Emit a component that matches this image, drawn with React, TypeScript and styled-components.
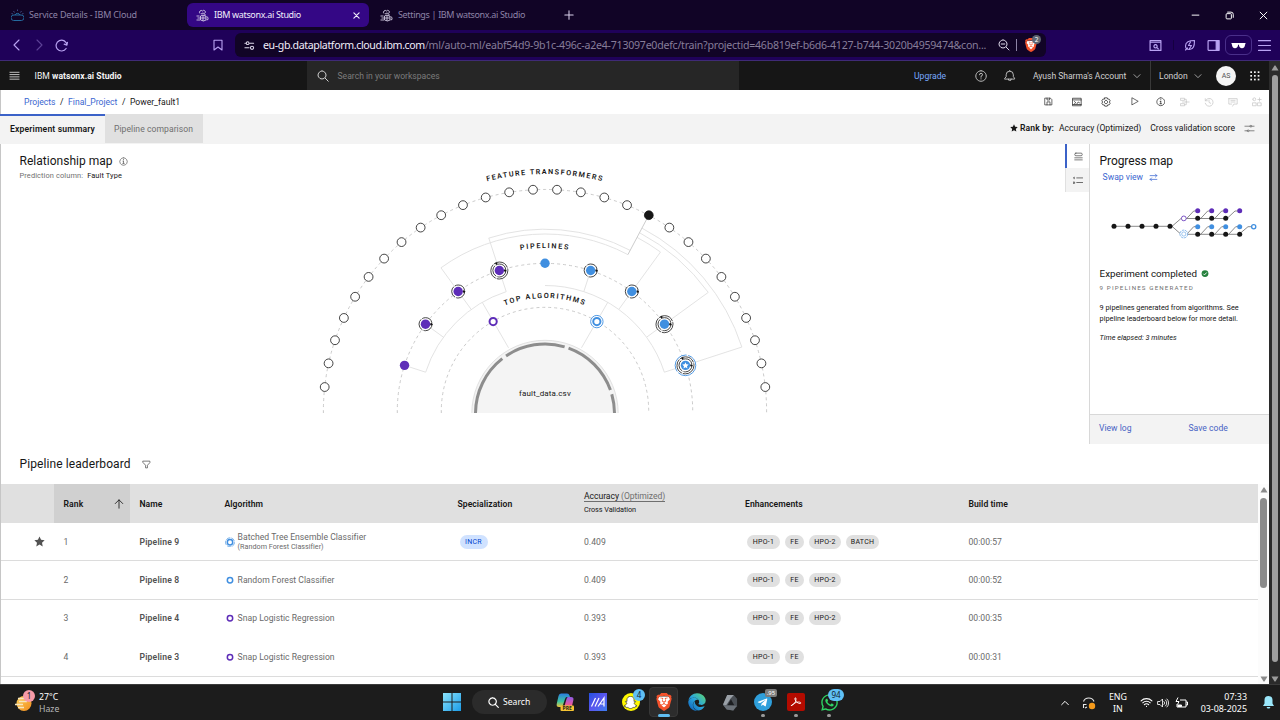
import React from 'react';
import styled, { createGlobalStyle, css } from 'styled-components';
import { FaEdge, FaSnapchatGhost, FaTelegramPlane, FaWhatsapp } from 'react-icons/fa';
import { FaBrave } from 'react-icons/fa6';

const Global = createGlobalStyle`
  * { box-sizing: border-box; }
  body { margin: 0; overflow: hidden; background: #1c1c1c; }
  svg { display: block; }
`;

const plex = `Roboto, "Liberation Sans", sans-serif`;
const system = `"Noto Sans", "Open Sans", sans-serif`;

const Screen = styled.div`
  width: 1280px;
  height: 720px;
  display: flex;
  flex-direction: column;
  font-family: ${system};
  white-space: nowrap;
  overflow: hidden;
`;

/* ---------- browser chrome ---------- */

const TabStrip = styled.div`
  height: 30px;
  flex: none;
  display: flex;
  align-items: center;
  background: #110426;
  color: #a79cc0;
`;

const BrowserTab = styled.div<{ $active?: boolean; $width: number }>`
  width: ${p => p.$width}px;
  height: 24px;
  padding-left: ${p => (p.$active ? 9 : 11)}px;
  padding-right: 8px;
  display: flex;
  align-items: center;
  gap: 5px;
  border-radius: 6px;
  background: ${p => (p.$active ? '#340785' : 'transparent')};
  color: ${p => (p.$active ? '#f1edfb' : '#8d83a6')};
`;

const TabTitle = styled.span<{ $tight?: boolean }>`
  flex: 1;
  font-size: 9px;
  line-height: 14px;
  letter-spacing: ${p => (p.$tight ? '-0.34px' : '-0.18px')};
`;

const NewTab = styled.div`
  margin-left: 20px;
  color: #d9d2ea;
`;

const WindowButtons = styled.div`
  margin-left: auto;
  display: grid;
  grid-template-columns: repeat(3, 34px);
  justify-items: center;
  align-items: center;
  color: #fff;
`;

const BrowserBar = styled.div`
  height: 31px;
  flex: none;
  display: grid;
  grid-template-columns: 22px 22px 23px 1fr 25px 5px 811px 96px 26px 10px 24px 23px 27px 24px;
  padding: 0 4px 0 6px;
  align-items: center;
  justify-items: center;
  background: #1f0159;
  border-bottom: 1px solid #3f2a76;
  color: #b9a3f2;
`;

const Disabled = styled.div`
  opacity: 0.4;
`;

const AddressBar = styled.div`
  width: 811px;
  height: 24px;
  border-radius: 6px;
  background: #110426;
  display: grid;
  grid-template-columns: 28px 723px 32px 28px;
  align-items: center;
  color: #ded9ea;
`;

const Address = styled.div`
  font-size: 10.6px;
  line-height: 16px;
  display: flex;
  color: #867d99;
`;
const Host = styled.span`
  color: #f2eefa;
  letter-spacing: -0.37px;
`;
const Path = styled.span`
  letter-spacing: -0.245px;
`;

const AddressTools = styled.div`
  height: 12px;
  display: flex;
  align-items: center;
  gap: 6px;
  padding-left: 12px;
  border-right: 1px solid #8d83a6;
  width: 31px;
`;

const Shield = styled.div`
  position: relative;
  margin-left: 6px;
  width: 12px;
  height: 14px;
  color: #f0532d;
  font-size: 14px;
`;
const ShieldCount = styled.span`
  position: absolute;
  left: 8px;
  top: -3px;
  width: 9px;
  height: 9px;
  border-radius: 50%;
  background: #5f6673;
  color: #fff;
  font-size: 6.5px;
  line-height: 9px;
  text-align: center;
`;

const BarDivider = styled.div`
  width: 1px;
  height: 10px;
  background: #150040;
`;

const PrivatePill = styled.div`
  width: 27px;
  height: 20px;
  border: 1px solid #4a2f8a;
  border-radius: 6px;
  display: grid;
  place-items: center;
  color: #fff;
`;

/* ---------- page frame ---------- */

const Viewport = styled.div`
  flex: 1;
  display: flex;
  min-height: 0;
`;

const Page = styled.div`
  width: 1269px;
  display: flex;
  flex-direction: column;
  background: #fff;
  font-family: ${plex};
  font-size: 8.6px;
  line-height: 12px;
  color: #161616;
`;

const PageScroll = styled.div`
  width: 11px;
  background: #2b2b2b;
  display: flex;
  flex-direction: column;
  align-items: center;
  justify-content: space-between;
  padding: 4px 0 2px 1px;
  color: #9c9c9c;
`;
const PageThumb = styled.div`
  width: 6px;
  height: 587px;
  border-radius: 3px;
  background: #9f9f9f;
  margin-bottom: auto;
  margin-top: 4px;
`;

const AppHeader = styled.header`
  height: 29px;
  flex: none;
  background: #161616;
  color: #d0d0d0;
  display: grid;
  grid-template-columns: 34.5px 272.5px 432px 175px 52px 29px 30px 101px 22px 11px 29px 19px 38px 19px;
  align-items: center;
`;
const Cell = styled.div`
  display: flex;
  justify-content: center;
`;
const MenuCell = styled.div`
  padding-left: 9px;
`;
const Brand = styled.div`
  color: #f4f4f4;
  letter-spacing: 0.05px;
  b { font-weight: 700; }
`;
const WorkspaceSearch = styled.div`
  height: 29px;
  background: #262626;
  color: #7c7c7c;
  display: flex;
  align-items: center;
  gap: 8.5px;
  padding-left: 10px;
  svg { color: #d0d0d0; }
`;
const Upgrade = styled.div`
  color: #78a9ff;
`;
const RegionSplit = styled.div`
  height: 29px;
  margin-left: 2px;
  border-left: 1px solid #393939;
`;
const Account = styled.div`
  padding-left: 8px;
  letter-spacing: -0.05px;
`;
const Avatar = styled.div`
  margin: 0 auto;
  width: 20px;
  height: 20px;
  border-radius: 50%;
  background: #f4f4f4;
  color: #525252;
  font-size: 7px;
  line-height: 20px;
  text-align: center;
`;

const CrumbBar = styled.div`
  height: 24px;
  flex: none;
  display: flex;
  justify-content: space-between;
  align-items: center;
  padding-left: 24px;
  border-left: 1px solid #c6c6c6;
`;
const Crumbs = styled.div`
  display: flex;
  gap: 4.5px;
  margin-top: -1px;
  margin-left: -1px;
`;
const Crumb = styled.span<{ $link?: boolean }>`
  color: ${p => (p.$link ? '#3a66d0' : '#161616')};
`;
const Actions = styled.div`
  display: grid;
  grid-template-columns: 28px 29px 29px 28px 25px 23px 25px 24px 24px;
  justify-items: center;
`;
const Action = styled.div<{ $off?: boolean }>`
  color: ${p => (p.$off ? '#c6c6c6' : '#262626')};
`;

const TabBar = styled.div`
  height: 30px;
  flex: none;
  display: flex;
  background: #f3f3f3;
`;
const PageTab = styled.div<{ $active?: boolean }>`
  height: 30px;
  width: ${p => (p.$active ? 105 : 98)}px;
  padding-left: ${p => (p.$active ? 10 : 9)}px;
  line-height: ${p => (p.$active ? 26 : 30)}px;
  ${p =>
    p.$active
      ? css`
          border-top: 2px solid #3b62c8;
          font-weight: 600;
          letter-spacing: 0.165px;
        `
      : css`
          height: 29px;
          background: #e0e0e0;
          color: #6f6f6f;
          letter-spacing: 0.05px;
        `}
`;
const RankBy = styled.div`
  margin-left: auto;
  display: flex;
  align-items: center;
  padding-right: 14px;
  padding-bottom: 2px;
  b { font-weight: 600; margin: 0 5px 0 2px; letter-spacing: 0.13px; }
  svg:last-child { color: #6f6f6f; margin-top: 1px; }
`;
const RankMetric = styled.span`
  margin-right: 9px;
`;

/* ---------- relationship map ---------- */

const MapSection = styled.section`
  height: 300px;
  flex: none;
  display: flex;
`;
const MapPane = styled.div`
  width: 1065px;
  height: 300px;
  border-left: 1px solid #c6c6c6;
  display: grid;
  grid-template-columns: 309px 480px 1fr;
`;
const MapHeading = styled.div`
  padding: 9px 0 0 18.5px;
`;
const Title = styled.h2`
  margin: 0;
  font-size: 12px;
  line-height: 17px;
  font-weight: 400;
  letter-spacing: 0.02px;
  display: flex;
  align-items: center;
  gap: 6px;
  svg { color: #525252; }
`;
const Prediction = styled.div`
  font-size: 7.4px;
  color: #6f6f6f;
  letter-spacing: 0.12px;
  span { color: #161616; margin-left: 2px; }
`;

const Rail = styled.div`
  width: 24px;
  display: flex;
  flex-direction: column;
`;
const RailButton = styled.div<{ $active?: boolean }>`
  height: 24px;
  display: grid;
  place-items: center;
  color: #525252;
  background: ${p => (p.$active ? '#fff' : '#f3f3f3')};
  border-left: ${p => (p.$active ? '2px solid #3b62c8' : '1px solid #e0e0e0')};
`;

const SidePanel = styled.aside`
  width: 180px;
  border-left: 1px solid #d8d8d8;
  display: flex;
  flex-direction: column;
`;
const PanelBody = styled.div`
  flex: 1;
  padding: 9px 0 0 9.6px;
`;
const PanelTitle = styled(Title)`
  letter-spacing: -0.1px;
`;
const SwapView = styled.div`
  color: #3a66d0;
  display: flex;
  align-items: center;
  gap: 6px;
  padding: 1px 0 0 3px;
`;
const Status = styled.div`
  margin-top: 22px;
  font-size: 9.8px;
  line-height: 14px;
  letter-spacing: -0.03px;
  display: flex;
  align-items: center;
  gap: 4px;
`;
const Generated = styled.div`
  margin-top: 2px;
  font-size: 6.2px;
  letter-spacing: 1.13px;
  line-height: 10px;
  color: #6f6f6f;
`;
const Summary = styled.p`
  margin: 9px 0 0;
  font-size: 7.3px;
  line-height: 11.2px;
`;
const Elapsed = styled.div`
  margin-top: 8px;
  font-size: 7.3px;
  font-style: italic;
  letter-spacing: 0;
`;
const PanelFooter = styled.div`
  height: 30px;
  display: grid;
  grid-template-columns: 89.5px 1fr;
  padding-left: 9px;
  align-items: center;
  background: #f3f3f3;
  border-top: 1px solid #d8d8d8;
  color: #4863c4;
  padding-bottom: 3px;
`;

/* ---------- leaderboard ---------- */

const Leaderboard = styled.section`
  flex: 1;
  border-left: 1px solid #c6c6c6;
  display: flex;
  flex-direction: column;
  min-height: 0;
`;
const BoardHeading = styled.div`
  height: 40px;
  flex: none;
  padding: 12px 0 0 18.6px;
  h2 { gap: 11px; letter-spacing: 0.09px; }
`;
const BoardArea = styled.div`
  flex: 1;
  display: flex;
  min-height: 0;
`;
const Table = styled.div`
  width: 1257px;
  overflow: hidden;
`;
const Row = styled.div<{ $head?: boolean; $lined?: boolean }>`
  display: grid;
  grid-template-columns: 53px 76px 85px 233px 126px 161px 224px 299px;
  height: ${p => (p.$head ? '39px' : '38.4px')};
  align-items: center;
  background: ${p => (p.$head ? '#e0e0e0' : '#fff')};
  font-weight: ${p => (p.$head ? 600 : 400)};
  color: ${p => (p.$head ? '#161616' : '#6a6a6a')};
  border-bottom: 1px solid ${p => (p.$head ? '#e0e0e0' : p.$lined ? '#dcdcdc' : '#fff')};
`;
const Col = styled.div<{ $strong?: boolean; $nudge?: number }>`
  padding-left: ${p => 9.5 + (p.$nudge ?? 0)}px;
  display: flex;
  align-items: center;
  font-weight: ${p => (p.$strong ? 600 : 'inherit')};
  letter-spacing: ${p => (p.$strong ? '0.17px' : '0.04px')};
  color: ${p => (p.$strong ? '#525252' : 'inherit')};
`;
const SortCol = styled.div`
  height: 39px;
  padding: 0 6px 0 9.5px;
  background: #d0d0d0;
  display: flex;
  align-items: center;
  justify-content: space-between;
  letter-spacing: 0.14px;
`;
const StarCol = styled.div`
  padding-left: 33px;
  color: #525252;
`;
const MetricHead = styled.div`
  padding: 0 0 2px 10px;
  font-weight: 400;
  small { display: block; font-size: 7.3px; line-height: 10px; letter-spacing: -0.07px; margin-top: 3px; }
`;
const MetricName = styled.span`
  display: inline-block;
  line-height: 10px;
  border-bottom: 1px solid #6f6f6f;
  letter-spacing: -0.05px;
  i { font-style: normal; color: #6f6f6f; }
`;
const Algo = styled.div`
  padding-left: 10px;
  display: flex;
  align-items: center;
  gap: 2.6px;
`;
const AlgoName = styled.div`
  line-height: 10px;
  letter-spacing: 0.02px;
  small { display: block; font-size: 7.2px; line-height: 9px; }
`;
const Tags = styled.div`
  padding-left: 12px;
  display: flex;
  gap: 5px;
`;
const SpecTags = styled(Tags)`
  padding-left: 11.5px;
`;
const Tag = styled.span<{ $blue?: boolean; $w: number }>`
  width: ${p => p.$w}px;
  height: 14px;
  line-height: 15px;
  border-radius: 7px;
  text-align: center;
  font-size: 7px;
  font-weight: 400;
  letter-spacing: 0.25px;
  background: ${p => (p.$blue ? '#d0e2ff' : '#e0e0e0')};
  color: ${p => (p.$blue ? '#0043ce' : '#161616')};
`;
const BoardScroll = styled.div`
  width: 11px;
  background: #fcfcfc;
  color: #8b8b8b;
  display: flex;
  flex-direction: column;
  align-items: center;
  padding: 3px 0 2px;
`;
const BoardThumb = styled.div`
  width: 7px;
  height: 90px;
  margin: 5px 0 auto;
  border-radius: 4px;
  background: #8b8b8b;
`;

/* ---------- Windows taskbar ---------- */

const Taskbar = styled.footer`
  height: 36px;
  flex: none;
  background: #1c1c1c;
  border-top: 1px solid #3b3b3b;
  display: flex;
  align-items: center;
  color: #fff;
`;
const Weather = styled.div`
  width: 435px;
  padding-left: 15px;
  display: flex;
  align-items: center;
  gap: 6px;
  font-size: 8.7px;
  line-height: 12px;
  div:last-child { color: #b8b8b8; }
`;
const WeatherText = styled.div`
  color: #fff;
`;
const WeatherIcon = styled.div`
  position: relative;
`;
const Launcher = styled.div`
  display: flex;
  align-items: center;
  margin-bottom: 1px;
`;
const AppSlot = styled.div<{ $active?: boolean }>`
  position: relative;
  width: 33px;
  height: 32px;
  display: grid;
  place-items: center;
  ${p => p.$active && css`
    &::before {
      content: '';
      position: absolute;
      inset: 1px 2px 1px 2px;
      border-radius: 4px;
      background: #2c2c2c;
      border: 1px solid #383838;
    }
  `}
  > svg, > span { position: relative; }
`;
const Running = styled.span<{ $wide?: boolean }>`
  && {
    position: absolute;
    bottom: 1px;
    left: 50%;
    transform: translateX(-50%);
    width: ${p => (p.$wide ? 12 : 4)}px;
    height: 3px;
    border-radius: 2px;
    background: ${p => (p.$wide ? '#60bdf0' : '#9a9a9a')};
  }
`;
const Badge = styled.span<{ $gray?: boolean; $pink?: boolean; $w?: number }>`
  && {
    position: absolute;
    right: ${p => (p.$pink ? -2 : p.$w === 16 ? 1 : 2)}px;
    top: ${p => (p.$pink ? -4 : 3)}px;
    width: ${p => p.$w ?? 12}px;
    height: ${p => (p.$gray ? 8 : 12)}px;
    line-height: ${p => (p.$gray ? 8 : 12)}px;
    border-radius: ${p => (p.$gray ? 2 : 6)}px;
    background: ${p => (p.$gray ? '#7c7c7c' : p.$pink ? '#f79aa8' : '#5fc0f5')};
    color: ${p => (p.$gray ? '#fff' : '#10202c')};
    font-size: ${p => (p.$gray ? 6 : 8)}px;
    text-align: center;
  }
`;
const SearchPill = styled.div`
  width: 75px;
  height: 24px;
  margin: 0 1px 0 4px;
  border-radius: 12px;
  background: #2b2b2b;
  display: flex;
  align-items: center;
  gap: 4px;
  padding-left: 16px;
  font-size: 8.6px;
`;
const RoundIcon = styled.span<{ $bg: string; $fg: string; $square?: boolean; $size: number }>`
  width: 18px;
  height: 18px;
  border-radius: ${p => (p.$square ? 2 : 9)}px;
  background: ${p => p.$bg};
  color: ${p => p.$fg};
  font-size: ${p => p.$size}px;
  display: grid;
  place-items: center;
`;
const Tray = styled.div`
  margin-left: auto;
  display: grid;
  grid-template-columns: 24px 24px 34px 22px 12px 25px 63px 22px;
  padding-right: 1px;
  align-items: center;
  justify-items: center;
  font-size: 8.9px;
  line-height: 12px;
  text-align: center;
`;
const Clock = styled.div`
  justify-self: end;
  padding-right: 10px;
  text-align: right;
`;

/* ---------- icons ---------- */

const Line = ({ d, size = 12, box = 24, w = 1.6, fill = 'none' }: { d: string; size?: number; box?: number; w?: number; fill?: string }) => (
  <svg width={size} height={size} viewBox={`0 0 ${box} ${box}`} fill={fill} stroke="currentColor" strokeWidth={w} strokeLinecap="round" strokeLinejoin="round">
    <path d={d} />
  </svg>
);

const CloudIcon = () => (
  <svg width="13" height="13" viewBox="0 0 26 26" fill="none" stroke="#246a9e" strokeWidth="2">
    <path d="M6 12h14a5 5 0 0 1 1 11H5a5.500 5.500 0 0 1 1-11z" />
    <path d="M8 12a5.500 5.500 0 0 1 10 0" />
    <path d="M13 1v3M5 4l2 3M21 4l-2 3M1 9l3 1M25 9l-3 1" stroke="#4a5b94" strokeWidth="1.600" />
  </svg>
);

const BeeIcon = () => (
  <svg width="13" height="13" viewBox="0 0 26 26" fill="none" stroke="#dcd5ec" strokeWidth="1.700">
    <path d="M10 10l4-2 4 2v4M9 14l5-2 6 3v7l-5 2-6-2z M9 18h11 M14 12v12 M8 9a3.500 3.500 0 1 1 5-5M13 4a3 3 0 1 1 5 4M1 14h6M3 18h5M1 22h7M21 15l3 2v4l-3 1" />
  </svg>
);

const Star = ({ size }: { size: number }) => (
  <svg width={size} height={size} viewBox="0 0 24 24" fill="currentColor">
    <path d="M12 1l3.400 7.300 7.800 1-5.700 5.500 1.500 7.900-7-3.900-7 3.900 1.500-7.900L.8 9.300l7.800-1z" />
  </svg>
);

const BraveMark = ({ size }: { size: number }) => (
  <svg width={size} height={size} viewBox="0 0 20 20">
    <path d="M5 4h10l2 3-2 7-5 4-5-4-2-7z" fill="#fff" />
    <FaBrave size={20} color="#f4522c" />
  </svg>
);

const Triangle = ({ down }: { down?: boolean }) => (
  <svg width="8" height="6" viewBox="0 0 8 6" fill="currentColor">
    <path d={down ? 'M0.5 0.5h7L4.500 5.500h-1z' : 'M0.500 5.500h7L4.500 0.500h-1z'} />
  </svg>
);

const chevron = 'M3 8l9 9 9-9';

const actionIcons: { d: string; off?: boolean; size?: number }[] = [
  { d: 'M3 3h14l4 4v14H3zM8 3v5h7V3M8 21v-8h8v8', size: 9 },
  { d: 'M2 3h20v18H2zM2 7h20M6 11l3 2.500L6 16M12 16l3-4 3 2M2 18h20', size: 10 },
  { d: 'M9 2h6l1 3 3.500 0 2.500 4-2 3 2 3-2.500 4-3.500 0-1 3H9l-1-3-3.500 0L2 15l2-3-2-3 2.500-4L8 5zM12 8a4 4 0 1 0 .1 0', size: 10 },
  { d: 'M5 3v18l16-9z', size: 9 },
  { d: 'M12 2a10 10 0 1 0 .1 0M12 11v6M10.500 11H12M10 17h4M12 6.500v.5', size: 9.5 },
  { d: 'M2 3h9v5H2zM2 16h9v5H2zM11 5.500h4V12h7M6 12h9M11 18.500h4V12', off: true, size: 10 },
  { d: 'M3 4v5h5M3.500 9A9.500 9.500 0 1 1 3 15M12 7v6l4 2', off: true, size: 10 },
  { d: 'M2 4h20v13h-8l-3 5M2 4v13h7M7 8h10M7 12h10', off: true, size: 10 },
  { d: 'M2 5.500a3.500 3.500 0 1 0 7 0a3.500 3.500 0 1 0-7 0M14 6h8M18 2v8M2 14h8v7H2zM14 14h8v7h-8z', off: true, size: 10 },
];

/* ---------- map geometry ---------- */

const CX = 235;
const CY = 267;
const PURPLE = '#5e2db8';
const BLUE = '#408fe0';

const at = (deg: number, r: number, cy = CY): [number, number] => {
  const a = (deg * Math.PI) / 180;
  return [CX - r * Math.cos(a), cy - r * Math.sin(a)];
};
const arc = (from: number, to: number, r: number, cy = CY) => {
  const [x1, y1] = at(from, r, cy);
  const [x2, y2] = at(to, r, cy);
  return `M${x1} ${y1}A${r} ${r} 0 0 1 ${x2} ${y2}`;
};
const spoke = (deg: number, r1: number, r2: number) => {
  const [x1, y1] = at(deg, r1);
  const [x2, y2] = at(deg, r2);
  return `M${x1} ${y1}L${x2} ${y2}`;
};

const FEATURE_STEP = 180 / 29;
const ACTIVE_FEATURE = 19;
const activeDeg = ACTIVE_FEATURE * FEATURE_STEP;

const connectors = [
  arc(18, 72, 125.5),
  arc(90, 162, 125.5),
  spoke(60, 73, 125.5),
  spoke(120, 73, 125.5),
  ...[18, 36, 54, 72, 108, 126, 144, 162].map(a => spoke(a, 125.5, 143)),
  spoke(54, 147, 177),
  spoke(72, 147, 182),
  arc(54, activeDeg, 177),
  arc(72, activeDeg, 181.8),
  spoke(126, 147, 196.5),
  spoke(144, 147, 201.8),
  spoke(162, 147, 207),
  arc(activeDeg, 126, 196.5),
  arc(activeDeg, 144, 201.8),
  arc(activeDeg, 162, 207),
];

const pipelines: { color: string; rings: number; best?: boolean }[] = [
  { color: PURPLE, rings: 0 },
  { color: PURPLE, rings: 1 },
  { color: PURPLE, rings: 1 },
  { color: PURPLE, rings: 2 },
  { color: BLUE, rings: 0 },
  { color: BLUE, rings: 1 },
  { color: BLUE, rings: 1 },
  { color: BLUE, rings: 2 },
  { color: BLUE, rings: 2, best: true },
];

const MapLabel = styled.text<{ $gap: number }>`
  font-family: ${plex};
  font-size: 7.2px;
  font-weight: 600;
  letter-spacing: ${p => p.$gap}px;
  fill: #161616;
`;
const DataLabel = styled.text`
  font-family: ${plex};
  font-size: 8px;
  letter-spacing: 0.14px;
  fill: #161616;
`;

const RelationshipMap = () => (
  <svg width="480" height="269" viewBox="0 0 480 269">
    <defs>
      <path id="arcFeature" d={arc(0, 180, 237)} />
      <path id="arcPipeline" d={arc(0, 180, 163)} />
      <path id="arcAlgorithm" d={arc(0, 180, 113)} />
    </defs>
    <g fill="none" stroke="#c4c4c4" strokeWidth="0.900" strokeDasharray="3 3">
      {[221.6, 147.7, 103.7].map(r => (
        <path key={r} d={`M${CX - r} 269V${CY}${arc(0, 180, r).replace('M', 'L')}V269`} />
      ))}
    </g>
    <g fill="none" stroke="#e0e0e0" strokeWidth="0.900">
      {connectors.map(d => <path key={d} d={d} />)}
      <path d={spoke(activeDeg, 177, 221)} stroke="#c6c6c6" />
    </g>
    <circle cx={CX} cy={CY + 2.5} r="73.200" fill="#f4f4f4" stroke="#dadada" strokeWidth="0.800" />
    <g fill="none" stroke="#8d8d8d" strokeWidth="3">
      {[[0, 52.1], [55.9, 106.4], [109.8, 160.3], [163.9, 180]].map(([a, b]) => (
        <path key={a} d={arc(a, b, 69.5, CY + 2.5)} />
      ))}
    </g>
    <g stroke="#161616" strokeWidth="0.800">
      {Array.from({ length: 28 }, (_, i) => {
        const [x, y] = at((i + 1) * FEATURE_STEP, 221.6);
        return <circle key={i} cx={x} cy={y} r="4.400" fill={i + 1 === ACTIVE_FEATURE ? '#161616' : '#fff'} />;
      })}
    </g>
    {pipelines.map((p, i) => {
      const [x, y] = at(18 * (i + 1), 147.7);
      return (
        <g key={i}>
          {p.best && <circle cx={x} cy={y} r="10.300" fill="#fff" stroke={BLUE} strokeWidth="0.900" strokeDasharray="24 1.500" />}
          {p.rings > 1 && <circle cx={x} cy={y} r="8.500" fill="#fff" stroke="#161616" strokeWidth="0.800" strokeDasharray="16 1" />}
          {p.rings > 0 && <circle cx={x} cy={y} r="6.500" fill="#fff" stroke="#161616" strokeWidth="0.800" strokeDasharray="12 1.200" />}
          {p.rings > 0 && <circle cx={x + 5.8} cy={y} r="1.200" fill="#161616" />}
          {p.rings > 1 && <circle cx={x - 3} cy={y - 7} r="1.100" fill="#161616" />}
          <circle cx={x} cy={y} r="4.700" fill={p.color} />
          {p.best && <path transform={`translate(${x} ${y})`} d="M0-3.200L.9-1 3.200-.8 1.500.8 2 3.200 0 2-2 3.200-1.500.8-3.200-.8-.9-1z" fill="#fff" />}
        </g>
      );
    })}
    {[60, 120].map((deg, i) => {
      const [x, y] = at(deg, 103.7);
      const color = i ? BLUE : PURPLE;
      return (
        <g key={deg} fill="#fff" stroke={color}>
          {i === 1 && <circle cx={x} cy={y + 0.4} r="6.200" strokeWidth="0.900" />}
          <circle cx={x} cy={y + 0.4} r="3.600" strokeWidth="2" />
        </g>
      );
    })}
    <MapLabel $gap={1.48} textAnchor="middle"><textPath href="#arcFeature" startOffset="50%">FEATURE TRANSFORMERS</textPath></MapLabel>
    <MapLabel $gap={1.65} textAnchor="middle"><textPath href="#arcPipeline" startOffset="50%">PIPELINES</textPath></MapLabel>
    <MapLabel $gap={1.55} textAnchor="middle"><textPath href="#arcAlgorithm" startOffset="50%">TOP ALGORITHMS</textPath></MapLabel>
    <DataLabel x={CX} y="252" textAnchor="middle">fault_data.csv</DataLabel>
  </svg>
);

const ProgressSvg = styled.svg`
  margin: 22px 0 0 9.4px;
`;

const columns = [88.7, 102.7, 116.7, 130.7];
const ProgressMap = () => (
  <ProgressSvg width="152" height="40" viewBox="0 0 152 40">
    <g fill="none" stroke="#7d7d7d" strokeWidth="0.900">
      <path d="M5 21.300H63L72 13.500H118L126 6h4.700M63 21.300L72 29.300H130L139 21.700h6" />
      {columns.slice(0, 3).map(x => <path key={x} d={`M${x - 11} 13.500L${x - 4} 6h4`} />)}
      {columns.map(x => <path key={x} d={`M${x - 11} 29.300L${x - 4} 21.700h4`} />)}
    </g>
    <g fill="#161616">
      {[5, 19, 33, 47, 61].map(x => <circle key={x} cx={x} cy="21.300" r="2.500" />)}
      {columns.slice(0, 3).map(x => <circle key={x} cx={x} cy="13.300" r="2.500" />)}
      {columns.map(x => <circle key={x} cx={x} cy="29.300" r="2.500" />)}
    </g>
    {columns.map(x => <circle key={x} cx={x} cy="5.700" r="2.500" fill={PURPLE} />)}
    {columns.map(x => <circle key={x} cx={x} cy="21.700" r="2.500" fill={BLUE} />)}
    <circle cx="74.800" cy="13.400" r="2.400" fill="#fff" stroke={PURPLE} strokeWidth="0.800" />
    <circle cx="74.800" cy="29" r="3.900" fill="#fff" stroke={BLUE} strokeWidth="0.600" strokeDasharray="2.500 0.700" />
    <circle cx="74.800" cy="29" r="2.100" fill="#fff" stroke={BLUE} strokeWidth="0.500" />
    <circle cx="144.700" cy="21.700" r="2.100" fill="#fff" stroke={BLUE} strokeWidth="1.300" />
  </ProgressSvg>
);

const AlgoMark = ({ color, batched }: { color: string; batched?: boolean }) => (
  <svg width="10" height="10" viewBox="0 0 10 10" fill="none" stroke={color}>
    <circle cx="5" cy="5.300" r="2.700" strokeWidth="1.500" />
    {batched && <circle cx="5" cy="5.300" r="4.500" strokeWidth="0.700" strokeDasharray="4.500 1" />}
  </svg>
);

/* ---------- data ---------- */

const tagWidths: Record<string, number> = { 'HPO-1': 33, FE: 19, 'HPO-2': 32, BATCH: 33 };

const rows = [
  { rank: 1, name: 'Pipeline 9', algo: 'Batched Tree Ensemble Classifier', sub: '(Random Forest Classifier)', color: BLUE, spec: 'INCR', acc: '0.409', tags: ['HPO-1', 'FE', 'HPO-2', 'BATCH'], time: '00:00:57', lined: true },
  { rank: 2, name: 'Pipeline 8', algo: 'Random Forest Classifier', color: BLUE, acc: '0.409', tags: ['HPO-1', 'FE', 'HPO-2'], time: '00:00:52', lined: true },
  { rank: 3, name: 'Pipeline 4', algo: 'Snap Logistic Regression', color: PURPLE, acc: '0.393', tags: ['HPO-1', 'FE', 'HPO-2'], time: '00:00:35', lined: false },
  { rank: 4, name: 'Pipeline 3', algo: 'Snap Logistic Regression', color: PURPLE, acc: '0.393', tags: ['HPO-1', 'FE'], time: '00:00:31', lined: true },
];

/* ---------- sections ---------- */

const BrowserChrome = () => (
  <>
    <TabStrip>
      <BrowserTab $width={187}><CloudIcon /><TabTitle>Service Details - IBM Cloud</TabTitle></BrowserTab>
      <BrowserTab $width={182} $active>
        <BeeIcon /><TabTitle $tight>IBM watsonx.ai Studio</TabTitle><Line d="M5 5l14 14M19 5L5 19" size={9} w={3} />
      </BrowserTab>
      <BrowserTab $width={175}><BeeIcon /><TabTitle $tight>Settings | IBM watsonx.ai Studio</TabTitle></BrowserTab>
      <NewTab><Line d="M12 2v20M2 12h20" size={10} w={2.5} /></NewTab>
      <WindowButtons>
        <Line d="M3 11h18" size={9} w={2.600} />
        <Line d="M3 9q0-2 2-2h10q2 0 2 2v10q0 2-2 2H5q-2 0-2-2zM7 3h9q6 0 6 6v8" size={9} w={2.600} />
        <Line d="M3 3l18 18M21 3L3 21" size={9} w={2.600} />
      </WindowButtons>
    </TabStrip>
    <BrowserBar>
      <Line d="M16 2L6 12l10 10" size={12} w={2.200} />
      <Disabled><Line d="M8 2l10 10L8 22" size={12} w={2.200} /></Disabled>
      <Line d="M22 11A10 10 0 1 0 20.500 17.500M23 6l-1 5.500-5-2" size={13} w={2.200} />
      <span />
      <Line d="M4 2.500h16V22l-8-6-8 6z" size={12} w={2.200} />
      <span />
      <AddressBar>
        <Cell><Line d="M2 7h3M13 7h8M5 7a3 3 0 1 0 6 0a3 3 0 1 0-6 0M2 17h9M14 17a3.500 3.500 0 1 0 7 0a3.500 3.500 0 1 0-7 0" size={11} w={2.300} /></Cell>
        <Address>
          <Host>eu-gb.dataplatform.cloud.ibm.com</Host>
          <Path>/ml/auto-ml/eabf54d9-9b1c-496c-a2e4-713097e0defc/train?projectid=46b819ef-b6d6-4127-b744-3020b4959474&amp;con...</Path>
        </Address>
        <AddressTools><Line d="M10 2a8 8 0 1 0 .1 0M16 16l6 6M6.500 10h7" size={12} w={2} /></AddressTools>
        <Shield><BraveMark size={14} /><ShieldCount>2</ShieldCount></Shield>
      </AddressBar>
      <span />
      <Line d="M2 3h20v18H2zM2 6h20M12 10.500a3 3 0 1 0 .1 0M14 15.500l3 2.500" size={13} w={2.200} />
      <BarDivider />
      <Line d="M21 3C10 3 3 6 3 14q0 7 8 7c8 0 10-7 10-18zM3 22l4-4M13 6l-4 7h6l-4 6" size={12} w={2.200} />
      <svg width="13" height="13" viewBox="0 0 24 24" fill="none" stroke="currentColor" strokeWidth="2.200"><rect x="2" y="3" width="20" height="18" rx="1" /><path d="M17 3h5v18h-5z" fill="currentColor" /></svg>
      <PrivatePill>
        <svg width="15" height="7" viewBox="0 0 32 16" fill="currentColor"><path d="M0 2h32v3h-1c0 6-3 9-7 9s-7-3-7-8h-2c0 5-3 8-7 8S1 11 1 5H0z" /></svg>
      </PrivatePill>
      <Line d="M1 3h22M1 12h22M1 21h22" size={13} w={2.200} />
    </BrowserBar>
  </>
);

const Header = () => (
  <AppHeader>
    <MenuCell><Line d="M2 5h20M2 10h20M2 15h20M2 20h20" size={11} w={2} /></MenuCell>
    <Brand>IBM <b>watsonx.ai Studio</b></Brand>
    <WorkspaceSearch><Line d="M10 2a8 8 0 1 0 .1 0M16 16l6.500 6.500" size={12} w={2} />Search in your workspaces</WorkspaceSearch>
    <span />
    <Upgrade>Upgrade</Upgrade>
    <Cell><Line d="M12 1.500a10.500 10.500 0 1 0 .1 0M9 9.500q0-3 3-3t3 3q0 2-3 3v2M12 17.500v.5" size={12} w={1.800} /></Cell>
    <Cell><Line d="M2 19h20v-2l-2.500-3V10a7.500 7.500 0 0 0-15 0v4L2 17zM12 2V1M9 19a3 3.500 0 0 0 6 0" size={11.5} w={1.800} /></Cell>
    <Account>Ayush Sharma's Account</Account>
    <Cell><Line d={chevron} size={8} w={2.200} /></Cell>
    <RegionSplit />
    <span>London</span>
    <Cell><Line d={chevron} size={8} w={2.200} /></Cell>
    <Avatar>AS</Avatar>
    <Cell>
      <svg width="10" height="10" viewBox="0 0 10 10" fill="#f4f4f4">
        {[0.3, 4, 7.7].flatMap(x => [0.3, 4, 7.7].map(y => <rect key={`${x}-${y}`} x={x} y={y} width="1.700" height="1.700" />))}
      </svg>
    </Cell>
  </AppHeader>
);

const Progress = () => (
  <SidePanel>
    <PanelBody>
      <PanelTitle>Progress map</PanelTitle>
      <SwapView>Swap view <Line d="M3 7h18M17 3l4 4-4 4M21 17H3M7 13l-4 4 4 4" size={9} w={2} /></SwapView>
      <ProgressMap />
      <Status>
        Experiment completed
        <svg width="8" height="8" viewBox="0 0 8 8"><circle cx="4" cy="3.600" r="3.400" fill="#24803c" /><path d="M2.300 3.700l1.200 1.200 2.200-2.400" fill="none" stroke="#fff" strokeWidth="0.900" /></svg>
      </Status>
      <Generated>9 PIPELINES GENERATED</Generated>
      <Summary>9 pipelines generated from algorithms. See<br />pipeline leaderboard below for more detail.</Summary>
      <Elapsed>Time elapsed: 3 minutes</Elapsed>
    </PanelBody>
    <PanelFooter><span>View log</span><span>Save code</span></PanelFooter>
  </SidePanel>
);

const Board = () => (
  <Leaderboard>
    <BoardHeading>
      <Title>Pipeline leaderboard <Line d="M3 3h18v4l-6.500 7v7h-5v-7L3 7z" size={9} w={2} /></Title>
    </BoardHeading>
    <BoardArea>
      <Table>
        <Row $head>
          <span />
          <SortCol>Rank <Line d="M12 22V2M3 11l9-9 9 9" size={10} w={2} /></SortCol>
          <Col>Name</Col>
          <Col>Algorithm</Col>
          <Col>Specialization</Col>
          <MetricHead><MetricName>Accuracy <i>(Optimized)</i></MetricName><small>Cross Validation</small></MetricHead>
          <Col $nudge={0.5}>Enhancements</Col>
          <Col>Build time</Col>
        </Row>
        {rows.map(r => (
          <Row key={r.rank} $lined={r.lined}>
            <StarCol>{r.rank === 1 && <Star size={11} />}</StarCol>
            <Col>{r.rank}</Col>
            <Col $strong>{r.name}</Col>
            <Algo>
              <AlgoMark color={r.color} batched={!!r.sub} />
              <AlgoName>{r.algo}{r.sub && <small>{r.sub}</small>}</AlgoName>
            </Algo>
            <SpecTags>{r.spec && <Tag $blue $w={28}>{r.spec}</Tag>}</SpecTags>
            <Col $nudge={0.5}>{r.acc}</Col>
            <Tags>{r.tags.map(t => <Tag key={t} $w={tagWidths[t]}>{t}</Tag>)}</Tags>
            <Col>{r.time}</Col>
          </Row>
        ))}
      </Table>
      <BoardScroll><Triangle /><BoardThumb /><Triangle down /></BoardScroll>
    </BoardArea>
  </Leaderboard>
);

const WindowsBar = () => (
  <Taskbar>
    <Weather>
      <WeatherIcon>
        <svg width="18" height="18" viewBox="0 0 18 18">
          <defs><linearGradient id="sun" x1="0" y1="0" x2="1" y2="1"><stop offset="0" stopColor="#ffd35a" /><stop offset="1" stopColor="#f08a1c" /></linearGradient></defs>
          <circle cx="9" cy="9.500" r="7.500" fill="url(#sun)" />
          <path d="M3 4.500h8M4 7.500h8M0 10.500h8M3 13.500h6" stroke="#f6e6c0" strokeWidth="1.300" />
        </svg>
        <Badge $pink>1</Badge>
      </WeatherIcon>
      <div><WeatherText>27°C</WeatherText><div>Haze</div></div>
    </Weather>
    <Launcher>
      <AppSlot>
        <svg width="18" height="18" viewBox="0 0 18 18">
          <defs><linearGradient id="win" x1="0" y1="0" x2="1" y2="1"><stop offset="0" stopColor="#8be3fb" /><stop offset="1" stopColor="#1b9ce8" /></linearGradient></defs>
          <path d="M0 0h8.500v8.500H0zM9.500 0H18v8.500H9.500zM0 9.500h8.500V18H0zM9.500 9.500H18V18H9.500z" fill="url(#win)" />
        </svg>
      </AppSlot>
      <SearchPill><Line d="M10 2a8 8 0 1 0 .1 0M16 16l6.500 6.500" size={11} w={2.600} />Search</SearchPill>
      <AppSlot>
        <svg width="18" height="18" viewBox="0 0 18 18">
          <defs>
            <linearGradient id="cpA" x1="0" y1="0" x2="0" y2="1"><stop offset="0" stopColor="#2a7de0" /><stop offset="0.600" stopColor="#3fc6a0" /><stop offset="1" stopColor="#f3c53a" /></linearGradient>
            <linearGradient id="cpB" x1="0" y1="0" x2="0" y2="1"><stop offset="0" stopColor="#8c5be8" /><stop offset="0.600" stopColor="#e659a0" /><stop offset="1" stopColor="#f58a5a" /></linearGradient>
          </defs>
          <path d="M5 .5h6q2 0 2.500 2L14 4h-3q-1.500 0-2 2l-2 6q-.6 2-2.500 2H3Q0 14 .8 10.500L2.500 3Q3 .5 5 .5z" fill="url(#cpA)" />
          <path d="M12 4h3q3 0 2.400 3L16 13q-.6 3-3 3H6q2-1 2.500-3L10.500 6q.5-2 1.500-2z" fill="url(#cpB)" />
          <rect x="4.500" y="12.500" width="13.500" height="5.500" rx="1" fill="#f6c433" />
          <text x="11.200" y="17.100" fontSize="5" fontWeight="700" textAnchor="middle" fill="#1c1c1c" fontFamily="Noto Sans, sans-serif">PRE</text>
        </svg>
      </AppSlot>
      <AppSlot>
        <svg width="18" height="18" viewBox="0 0 18 18">
          <defs><linearGradient id="ma" x1="0" y1="0" x2="1" y2="1"><stop offset="0" stopColor="#2450e0" /><stop offset="0.500" stopColor="#5b56ee" /><stop offset="1" stopColor="#3c7df0" /></linearGradient></defs>
          <rect width="18" height="18" fill="url(#ma)" />
          <path d="M2.500 13.500L6.500 5M6 13.500L10 5M9 13.500L15 5v8.500M11.500 11H15" stroke="#fff" strokeWidth="1.200" fill="none" />
        </svg>
      </AppSlot>
      <AppSlot><RoundIcon $bg="#fff800" $fg="#fff" $size={13}><FaSnapchatGhost stroke="#222" strokeWidth="26" /></RoundIcon><Badge>4</Badge></AppSlot>
      <AppSlot $active><BraveMark size={18} /><Running $wide /></AppSlot>
      <AppSlot>
        <svg width="18" height="18" viewBox="0 0 18 18">
          <defs><linearGradient id="edge" x1="0" y1="1" x2="1" y2="0"><stop offset="0" stopColor="#0c59b8" /><stop offset="0.500" stopColor="#2aa6dc" /><stop offset="1" stopColor="#5fd86a" /></linearGradient></defs>
          <FaEdge size={18} fill="url(#edge)" />
        </svg>
      </AppSlot>
      <AppSlot>
        <svg width="16" height="17" viewBox="0 0 17 18">
          <path d="M5.500 1h7L16 5v8L12 17.500 5 16.500 1 11.500z" fill="#4a4f55" />
          <path d="M5.500 1h7L9 5 4.500 12 1 11.500z" fill="#9aa0a7" />
          <path d="M9.500 5.500l3.500 6.500H6z" fill="#1c1e21" /><path d="M1 11.500l5 .8 9.500.2L12 17.500 5 16.500z" fill="#6b7178" />
        </svg>
      </AppSlot>
      <AppSlot><RoundIcon $bg="#2f9fdb" $fg="#fff" $size={11}><FaTelegramPlane /></RoundIcon><Badge $gray $w={12}>.95</Badge><Running /></AppSlot>
      <AppSlot>
        <RoundIcon $bg="#b30b00" $fg="#fff" $square $size={12}>
          <Line d="M3 19c5-1 9-7 9-13 0-4-3-3-2 1 2 5 6 8 10 8 3 0 2-3-3-3-6 0-11 4-14 7z" size={12} w={1.800} />
        </RoundIcon>
        <Running />
      </AppSlot>
      <AppSlot><RoundIcon $bg="transparent" $fg="#2fd163" $size={19}><FaWhatsapp /></RoundIcon><Badge $w={16}>94</Badge><Running /></AppSlot>
    </Launcher>
    <Tray>
      <Line d="M4 16l8-8 8 8" size={10} w={2.400} />
      <svg width="14" height="14" viewBox="0 0 14 14" fill="none" stroke="#e8e8e8" strokeWidth="1.100">
        <path d="M1.500 5.500a5.500 5 0 0 1 10.500 0" /><path d="M1.500 12V8.500h3M3 12l2-1" /><circle cx="10" cy="10" r="3.200" fill="#f59a1b" stroke="none" />
      </svg>
      <div>ENG<br />IN</div>
      <Line d="M2 9a14 14 0 0 1 20 0M5 12.500a10 10 0 0 1 14 0M8 16a5.500 5.500 0 0 1 8 0M12 19v.5" size={13} w={2} />
      <Line d="M2 9h4l5-5v16l-5-5H2zM14 9a4 4 0 0 1 0 6M17 6a8 8 0 0 1 0 12M20 4a11 11 0 0 1 0 16" size={12} w={1.700} />
      <svg width="13" height="12" viewBox="0 0 26 24" fill="none" stroke="#fff" strokeWidth="2"><path d="M10 6h12v14H4v-6M22 10h3v6h-3M6 1l-4 8h6l-3 6" /><path d="M6 16h7v3H6z" fill="#fff" /></svg>
      <Clock>07:33<br />03-08-2025</Clock>
      <svg width="11" height="13" viewBox="0 0 11 13" fill="#9be7fa"><path d="M5.500 0a4 4 0 0 1 4 4v3.500L11 10H0l1.500-2.500V4a4 4 0 0 1 4-4zM3.500 11h4l-1 1.500h-2z" /></svg>
    </Tray>
  </Taskbar>
);

export default function App() {
  return (
    <Screen>
      <Global />
      <BrowserChrome />
      <Viewport>
        <Page>
          <Header />
          <CrumbBar>
            <Crumbs>
              <Crumb $link>Projects</Crumb><span>/</span>
              <Crumb $link>Final_Project</Crumb><span>/</span>
              <Crumb>Power_fault1</Crumb>
            </Crumbs>
            <Actions>
              {actionIcons.map((a, i) => <Action key={i} $off={a.off}><Line d={a.d} size={a.size ?? 9.5} w={1.8} /></Action>)}
            </Actions>
          </CrumbBar>
          <TabBar>
            <PageTab $active>Experiment summary</PageTab>
            <PageTab>Pipeline comparison</PageTab>
            <RankBy>
              <Star size={8} /><b>Rank by:</b>
              <RankMetric>Accuracy (Optimized)</RankMetric>
              <RankMetric>Cross validation score</RankMetric>
              <Line d="M2 7h11M17 7h5M13 7a2 2 0 1 0 4 0a2 2 0 1 0-4 0M2 17h5M11 17h11M7 17a2 2 0 1 0 4 0a2 2 0 1 0-4 0" size={11} w={1.800} />
            </RankBy>
          </TabBar>
          <MapSection>
            <MapPane>
              <MapHeading>
                <Title>Relationship map <Line d="M12 2a10 10 0 1 0 .1 0M12 11v6M10.500 11H12M10 17h4M12 6.500v.5" size={9} w={1.8} /></Title>
                <Prediction>Prediction column: <span>Fault Type</span></Prediction>
              </MapHeading>
              <RelationshipMap />
            </MapPane>
            <Rail>
              <RailButton $active><Line d="M5 3h14q3 0 3 3.500T19 10H5q-3 0-3-3.500T5 3zM2 15.500h20M2 21h20" size={9} w={2} /></RailButton>
              <RailButton><Line d="M9 7h14M9 18h14M1 7l2-2v4M1 17h3v3H1z" size={10} w={2} /></RailButton>
            </Rail>
            <Progress />
          </MapSection>
          <Board />
        </Page>
        <PageScroll><Triangle /><PageThumb /><Triangle down /></PageScroll>
      </Viewport>
      <WindowsBar />
    </Screen>
  );
}
